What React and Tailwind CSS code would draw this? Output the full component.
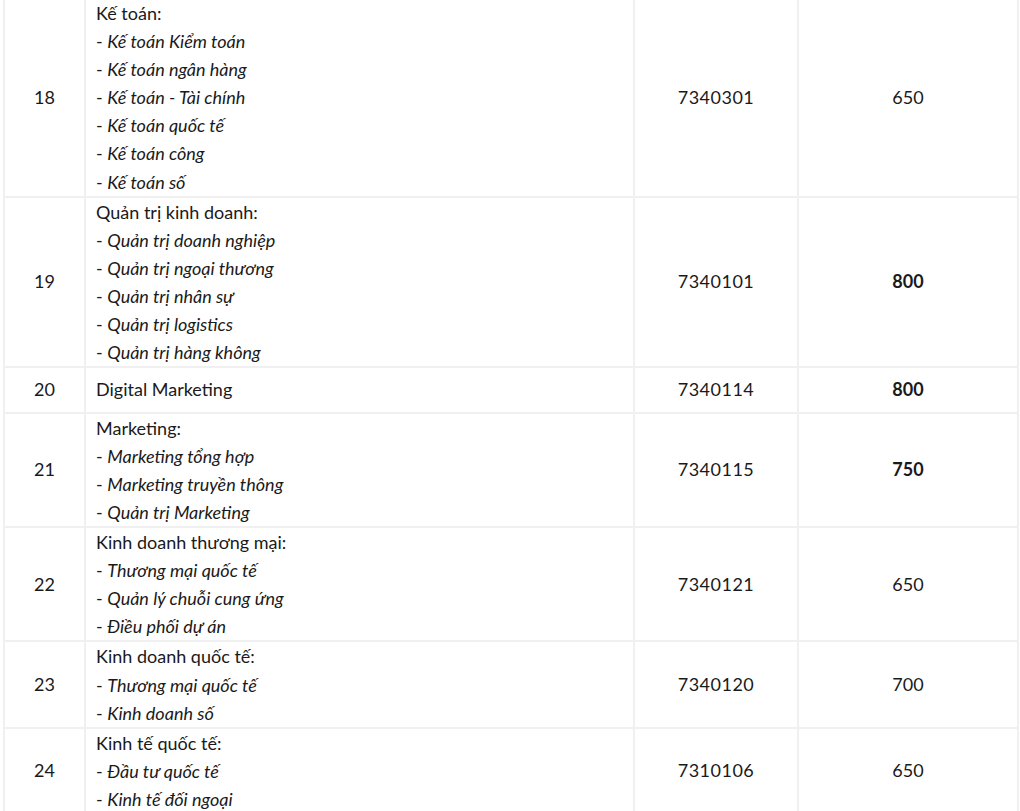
import React from 'react';

const rows = [
    { no: 18, title: 'Kế toán:', items: ['Kế toán Kiểm toán', 'Kế toán ngân hàng', 'Kế toán - Tài chính', 'Kế toán quốc tế', 'Kế toán công', 'Kế toán số'], code: '7340301', quota: '650' },
    { no: 19, title: 'Quản trị kinh doanh:', items: ['Quản trị doanh nghiệp', 'Quản trị ngoại thương', 'Quản trị nhân sự', 'Quản trị logistics', 'Quản trị hàng không'], code: '7340101', quota: '800', bold: true },
    { no: 20, title: 'Digital Marketing', items: [], code: '7340114', quota: '800', bold: true },
    { no: 21, title: 'Marketing:', items: ['Marketing tổng hợp', 'Marketing truyền thông', 'Quản trị Marketing'], code: '7340115', quota: '750', bold: true },
    { no: 22, title: 'Kinh doanh thương mại:', items: ['Thương mại quốc tế', 'Quản lý chuỗi cung ứng', 'Điều phối dự án'], code: '7340121', quota: '650' },
    { no: 23, title: 'Kinh doanh quốc tế:', items: ['Thương mại quốc tế', 'Kinh doanh số'], code: '7340120', quota: '700' },
    { no: 24, title: 'Kinh tế quốc tế:', items: ['Đầu tư quốc tế', 'Kinh tế đối ngoại'], code: '7310106', quota: '650' },
];

const cell = 'border-2 border-[#f0f0f0] align-middle';

const App = () => {
    return (
        <div className="bg-white w-[1020px] h-[811px] overflow-hidden pl-[3px] text-[#1a1a1a] font-['Lato','Noto_Sans',sans-serif]">
            <table className="border-collapse -mt-[3px] text-[18px] w-[1014px] table-fixed">
                <colgroup>
                    <col className="w-[81px]" />
                    <col className="w-[549px]" />
                    <col className="w-[164px]" />
                    <col className="w-[220px]" />
                </colgroup>
                <tbody>
                    {rows.map((r) => {
                        const single = r.items.length === 0;
                        return (
                            <tr key={r.no}>
                                <td className={`${cell} text-center`}>{r.no}</td>
                                <td className={`${cell} px-[10px] ${single ? 'py-2 leading-[27.5px]' : 'py-0 leading-[28.1px]'}`}>
                                    <div>{r.title}</div>
                                    {r.items.map((it) => (
                                        <div key={it}>- <em className="italic">{it}</em></div>
                                    ))}
                                </td>
                                <td className={`${cell} text-center tracking-[0.5px]`}>{r.code}</td>
                                <td className={`${cell} text-center ${r.bold ? 'font-bold' : ''}`}>{r.quota}</td>
                            </tr>
                        );
                    })}
                </tbody>
            </table>
        </div>
    );
};

export default App;
